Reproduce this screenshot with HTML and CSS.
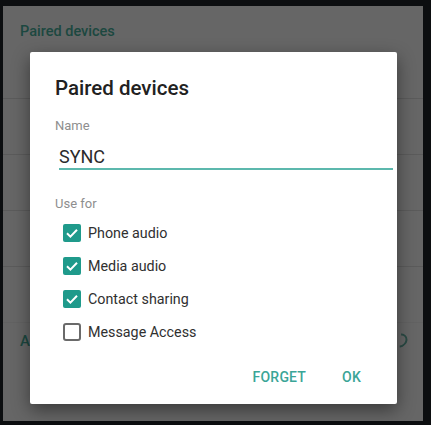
FILE: index.html
```html
<!DOCTYPE html>
<html>
<head>
<meta charset="utf-8">
<link rel="stylesheet" href="styles.css">
</head>
<body>
<div class="screen">
  <div class="bg-list">
    <div class="bg-header">Paired devices</div>
    <div class="bg-row first"></div>
    <div class="bg-row"></div>
    <div class="bg-row"></div>
    <div class="bg-row"></div>
    <div class="bg-row tall">
      <span class="bg-a">A</span>
      <span class="bg-arc"></span>
    </div>
  </div>

  <div class="dialog">
    <div class="title">Paired devices</div>
    <div class="label name-label">Name</div>
    <div class="field">SYNC</div>
    <div class="label use-label">Use for</div>
    <div class="options">
      <div class="option">
        <svg class="box" width="18" height="18" viewBox="0 0 18 18"><rect width="18" height="18" rx="2" fill="#1f9a8b"/><path d="M4 9.3 L7.4 12.6 L14 5.8" fill="none" stroke="#fff" stroke-width="2"/></svg>
        <span>Phone audio</span>
      </div>
      <div class="option">
        <svg class="box" width="18" height="18" viewBox="0 0 18 18"><rect width="18" height="18" rx="2" fill="#1f9a8b"/><path d="M4 9.3 L7.4 12.6 L14 5.8" fill="none" stroke="#fff" stroke-width="2"/></svg>
        <span>Media audio</span>
      </div>
      <div class="option">
        <svg class="box" width="18" height="18" viewBox="0 0 18 18"><rect width="18" height="18" rx="2" fill="#1f9a8b"/><path d="M4 9.3 L7.4 12.6 L14 5.8" fill="none" stroke="#fff" stroke-width="2"/></svg>
        <span>Contact sharing</span>
      </div>
      <div class="option">
        <svg class="box" width="18" height="18" viewBox="0 0 18 18"><rect x="1" y="1" width="16" height="16" rx="2" fill="none" stroke="#6a6a6a" stroke-width="2"/></svg>
        <span>Message Access</span>
      </div>
    </div>
    <div class="actions">
      <span class="btn">FORGET</span>
      <span class="btn">OK</span>
    </div>
  </div>
</div>
</body>
</html>
```
FILE: styles.css
```css
html, body {
  margin: 0;
  padding: 0;
}
body {
  width: 431px;
  height: 425px;
  background: #0c0e10;
  overflow: hidden;
  font-family: Roboto, "Liberation Sans", sans-serif;
}
.screen {
  position: relative;
  margin-left: 3px;
  margin-top: 6px;
  width: 420px;
  height: 415px;
  background: #666666;
}
.bg-list {
  display: flex;
  flex-direction: column;
}
.bg-header {
  padding: 17px 0 0 17px;
  height: 74px;
  box-sizing: border-box;
  font-size: 14.5px;
  font-weight: 500;
  color: #1c4840;
}
.bg-row {
  height: 56px;
  border-top: 1px solid #5b5b5b;
  box-sizing: border-box;
  position: relative;
}
.bg-row.first {
  margin-top: 18px;
}
.bg-row.tall {
  height: 93px;
  border-top-color: #626262;
}
.bg-row.tall + .bg-row,
.bg-list::after {
  content: "";
}
.bg-a {
  position: absolute;
  left: 17px;
  top: 9px;
  font-size: 15px;
  font-weight: 500;
  color: #1c4840;
}
.bg-arc {
  position: absolute;
  left: 391px;
  top: 10px;
  width: 9px;
  height: 11px;
  border: 2px solid #2a4a44;
  border-left-color: transparent;
  border-bottom-color: transparent;
  border-radius: 50%;
  transform: rotate(45deg);
}
.dialog {
  position: absolute;
  left: 27px;
  top: 46px;
  width: 367px;
  height: 352px;
  box-sizing: border-box;
  background: #ffffff;
  border-radius: 2px;
  box-shadow: 0 6px 18px rgba(0,0,0,0.45);
  padding: 24px 0 0 25px;
  display: flex;
  flex-direction: column;
}
.title {
  font-size: 20.5px;
  line-height: 24px;
  font-weight: 500;
  color: #212121;
}
.label {
  font-size: 13px;
  line-height: 16px;
  color: #8e8e8e;
}
.name-label {
  margin-top: 18px;
}
.field {
  margin-top: 12px;
  margin-left: 4px;
  width: 334px;
  height: 24px;
  box-sizing: border-box;
  font-size: 18px;
  line-height: 22px;
  color: #2b2b2b;
  border-bottom: 2px solid #5cb8ad;
}
.use-label {
  margin-top: 26px;
}
.options {
  margin-top: 4px;
  margin-left: 8px;
  display: flex;
  flex-direction: column;
}
.option {
  height: 33px;
  display: flex;
  align-items: center;
  gap: 7px;
  font-size: 14.3px;
  color: #303030;
}
.box {
  flex: none;
}
.actions {
  margin-top: 11px;
  height: 36px;
  display: flex;
  justify-content: flex-end;
  align-items: center;
  gap: 36px;
  padding-right: 36px;
}
.btn {
  font-size: 14px;
  font-weight: 500;
  color: #3aa597;
  letter-spacing: 0.2px;
}
```
